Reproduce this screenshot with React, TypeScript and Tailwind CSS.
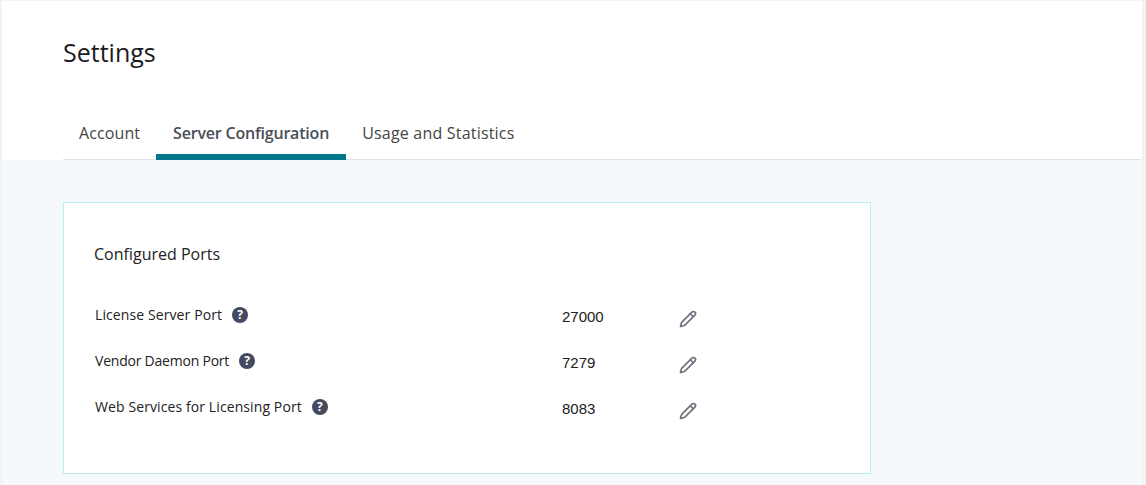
import { Pencil } from "lucide-react";

const ports = [
  { label: "License Server Port", value: "27000", tracking: "tracking-[0.1px]" },
  { label: "Vendor Daemon Port", value: "7279", tracking: "tracking-[-0.22px]" },
  { label: "Web Services for Licensing Port", value: "8083", tracking: "tracking-[0.1px]" },
];

const font = "font-['Open_Sans','Noto_Sans',sans-serif]";

const HelpIcon = () => (
  <span className="flex h-4 w-4 translate-y-px items-center justify-center rounded-full bg-[#434a5f] text-[12px] font-bold leading-none tracking-normal text-white">
    ?
  </span>
);

const App = () => {
  return (
    <div className={`h-[485px] w-[1146px] overflow-hidden bg-[#f3f3f3] pl-[2px] pr-[4px] pt-px ${font}`}>
      <div className="bg-white pl-[61px] pt-[35px]">
        <h1 className="text-[25px] leading-[32px] text-[#1b1b1f]">Settings</h1>
        <div className="mr-px mt-[49px] flex h-[43px] border-b border-[#dde2e8] text-[16px] text-[#444]">
          <div className="flex h-[43px] items-start px-4 pt-[4px] tracking-[0.1px]">Account</div>
          <div className="flex h-[43px] items-start border-b-[6px] border-[#00788a] px-[17px] pt-[4px] font-semibold tracking-[-0.2px] text-[#4a4f57]">
            Server Configuration
          </div>
          <div className="flex h-[43px] items-start px-4 pt-[4px] tracking-[0.2px]">Usage and Statistics</div>
        </div>
      </div>
      <div className="ml-px h-[325px] bg-[#f5f9fc] pl-[60px] pt-[42px]">
        <section className="h-[272px] w-[808px] border border-[#b8f0ee] bg-white pl-[30px] pt-[40px]">
          <h2 className="text-[16px] leading-[22px] text-[#222]">Configured Ports</h2>
          <div className="mt-[37px] flex flex-col gap-[22px]">
            {ports.map((port) => (
              <div key={port.label} className="flex h-[24px] items-center text-[14px] text-[#222]">
                <div className={`flex w-[468px] items-center gap-[10px] pl-px ${port.tracking}`}>
                  <span>{port.label}</span>
                  <HelpIcon />
                </div>
                <span className="w-[117px] pt-[6px] font-['Liberation_Sans',sans-serif] text-[15px]">{port.value}</span>
                <Pencil className="mt-[10px] h-[18px] w-[18px] text-[#6d717c]" strokeWidth={2.2} />
              </div>
            ))}
          </div>
        </section>
      </div>
    </div>
  );
};

export default App;
